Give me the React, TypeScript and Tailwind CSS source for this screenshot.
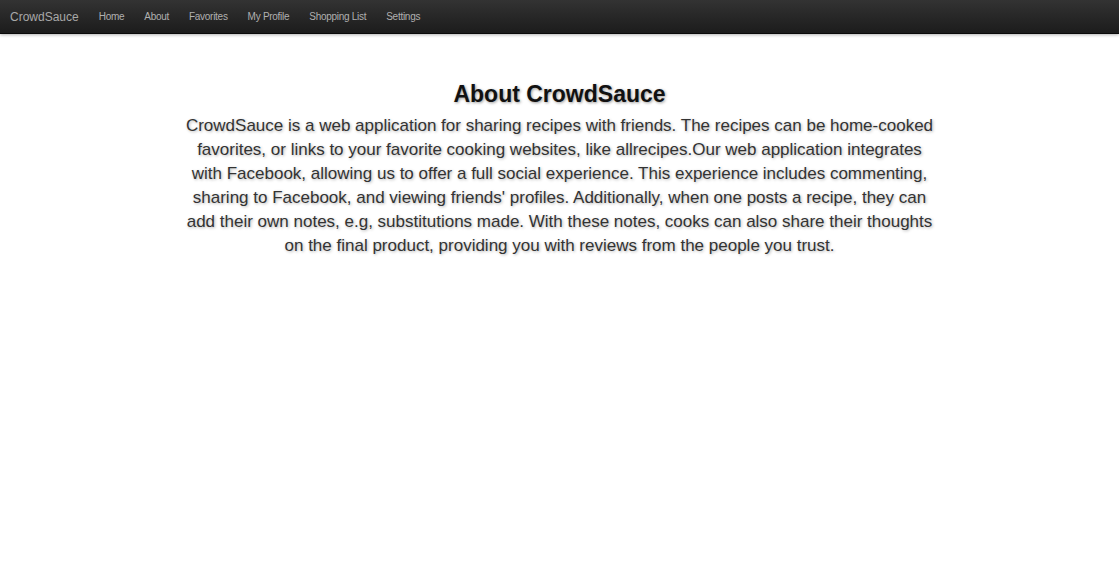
const links = ["Home", "About", "Favorites", "My Profile", "Shopping List", "Settings"];

const lines = [
  "CrowdSauce is a web application for sharing recipes with friends. The recipes can be home-cooked",
  "favorites, or links to your favorite cooking websites, like allrecipes.Our web application integrates",
  "with Facebook, allowing us to offer a full social experience. This experience includes commenting,",
  "sharing to Facebook, and viewing friends' profiles. Additionally, when one posts a recipe, they can",
  "add their own notes, e.g, substitutions made. With these notes, cooks can also share their thoughts",
  "on the final product, providing you with reviews from the people you trust.",
];

export default function App() {
  return (
    <div className="min-h-screen bg-white font-['Liberation_Sans',Arial,sans-serif]">
      <nav className="flex h-[34px] items-center border-b border-[#0a0a0a] bg-gradient-to-b from-[#333333] to-[#1c1c1c] shadow-[0_1px_3px_rgba(0,0,0,0.3)]">
        <a className="pl-[10px] pr-[10px] text-[12px] text-[#a8a8a8]">CrowdSauce</a>
        <ul className="flex items-center">
          {links.map((l) => (
            <li key={l} className="px-[10px] text-[10px] tracking-[-0.28px] text-[#b0b0b0]">
              {l}
            </li>
          ))}
        </ul>
      </nav>

      <main className="mx-auto mt-[46px] text-center">
        <h2 className="text-[23px] leading-[28px] font-bold text-[#111111] [text-shadow:1px_1px_3px_rgba(0,0,0,0.4)]">
          About CrowdSauce
        </h2>
        <p className="mt-[6px] text-[17px] leading-[24px] text-[#333333] [text-shadow:1px_1px_3px_rgba(0,0,0,0.3)]">
          {lines.map((l, i) => (
            <span key={l}>
              {l}
              {i < lines.length - 1 && <br />}
            </span>
          ))}
        </p>
      </main>
    </div>
  );
}
